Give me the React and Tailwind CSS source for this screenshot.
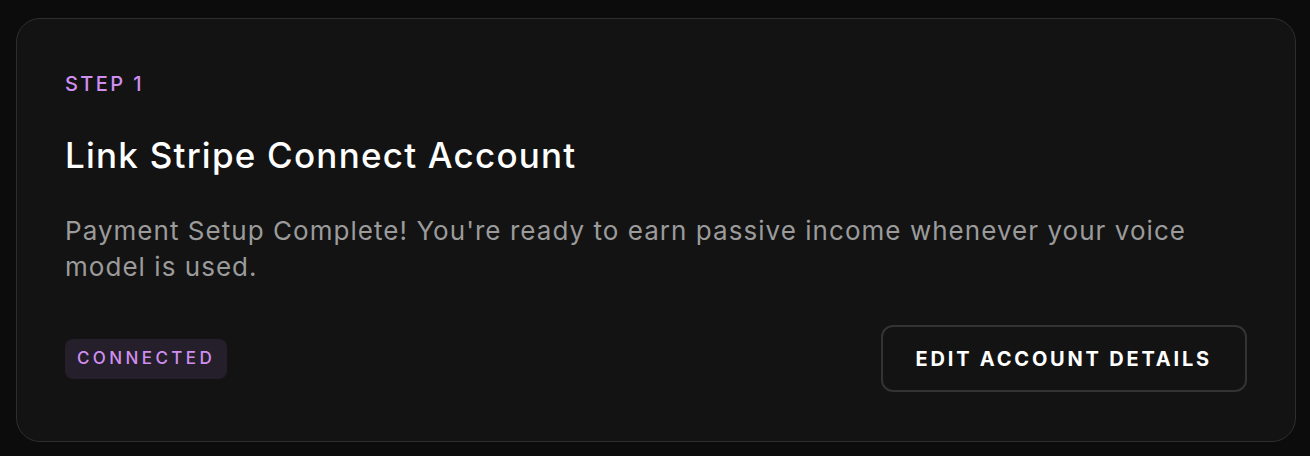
export default function App() {
  return (
    <div className="min-h-screen bg-[#0c0c0c] pl-4 pr-[14px] pt-[18px] pb-[15px]" style={{ fontFamily: "Inter, 'Noto Sans', sans-serif" }}>
      <div className="rounded-[24px] border border-[#2e2e2e] bg-[#131313] px-12 pt-[51px] pb-[49px]">
        <p className="text-[20px] leading-[28px] font-medium tracking-[0.12em] text-[#d08ff0]">STEP 1</p>

        <h2 className="mt-[35px] text-[35px] leading-[44px] font-medium tracking-[0.035em] text-white">Link Stripe Connect Account</h2>

        <p className="mt-[36px] text-[26px] leading-[36px] tracking-[0.04em] text-[#9b9b9b]">
          Payment Setup Complete! You're ready to earn passive income whenever your voice model is used.
        </p>

        <div className="mt-[40px] flex items-center justify-between">
          <span className="flex h-10 items-center rounded-lg bg-[#241f2a] px-3 text-[17px] font-medium tracking-[0.2em] text-[#d08ff0]">
            CONNECTED
          </span>
          <button className="h-[67px] rounded-xl border-2 border-[#333333] bg-[#131313] px-[33px] text-[20px] font-bold tracking-[0.14em] text-white">
            EDIT ACCOUNT DETAILS
          </button>
        </div>
      </div>
    </div>
  );
}
